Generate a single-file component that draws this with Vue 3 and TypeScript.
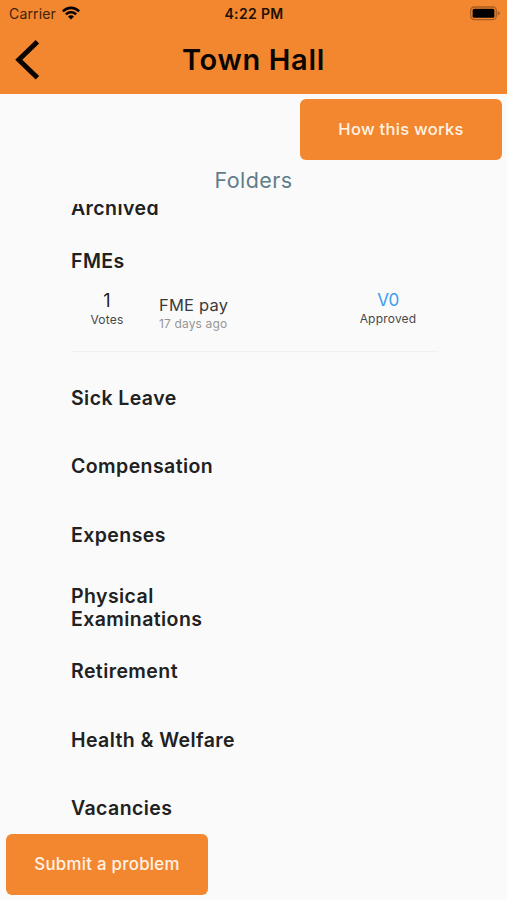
<script setup lang="ts">
interface Problem {
  votes: number
  title: string
  age: string
  version: string
  status: string
}

interface Folder {
  name: string
  modifier?: string
  problems: Problem[]
}

const folders: Folder[] = [
  { name: 'Archived', modifier: 'compact', problems: [] },
  {
    name: 'FMEs',
    modifier: 'open',
    problems: [
      { votes: 1, title: 'FME pay', age: '17 days ago', version: 'V0', status: 'Approved' },
    ],
  },
  { name: 'Sick Leave', problems: [] },
  { name: 'Compensation', problems: [] },
  { name: 'Expenses', modifier: 'before-tall', problems: [] },
  { name: 'Physical Examinations', modifier: 'tall', problems: [] },
  { name: 'Retirement', problems: [] },
  { name: 'Health & Welfare', problems: [] },
  { name: 'Vacancies', problems: [] },
]
</script>

<template>
  <div class="screen">
    <header class="header">
      <div class="status-bar">
        <div class="carrier">
          <span class="carrier-name">Carrier</span>
          <svg class="wifi" viewBox="0 0 18 14" width="18" height="14" aria-hidden="true">
            <path d="M0 4.4C5-.7 13-.7 18 4.4L16.2 6.2C12.2 2.3 5.8 2.3 1.8 6.2Z" />
            <path d="M3 7.4C6.4 4.1 11.6 4.1 15 7.4L13.2 9.2C10.7 6.9 7.3 6.9 4.8 9.2Z" />
            <path d="M6 10.4C7.7 8.8 10.3 8.8 12 10.4L9 13.4Z" />
          </svg>
        </div>
        <span class="clock">4:22 PM</span>
        <svg class="battery" viewBox="0 0 31 15" width="31" height="15" aria-hidden="true">
          <rect class="battery-shell" x="1.7" y="1" width="25.6" height="12.6" rx="3.6" />
          <rect x="3.6" y="2.8" width="21.8" height="9" rx="1.6" />
          <path class="battery-tip" d="M28.6 5Q30.8 5.8 30.8 7.3T28.6 9.6Z" />
        </svg>
      </div>
      <div class="title-bar">
        <button class="back" type="button" aria-label="Back">
          <svg viewBox="0 0 26 42" width="26" height="42" aria-hidden="true">
            <path d="M22.4 2.8L3.8 20.8L22.4 38.8" />
          </svg>
        </button>
        <h1 class="title">Town Hall</h1>
      </div>
    </header>

    <div class="top-action">
      <button class="action help" type="button">How this works</button>
    </div>

    <h2 class="heading">Folders</h2>

    <main class="folders">
      <section
        v-for="folder in folders"
        :key="folder.name"
        class="folder"
        :class="folder.modifier"
      >
        <h3 class="folder-name">{{ folder.name }}</h3>
        <article v-for="problem in folder.problems" :key="problem.title" class="problem">
          <div class="votes">
            <span class="vote-count">{{ problem.votes }}</span>
            <span class="caption">Votes</span>
          </div>
          <div class="summary">
            <span class="problem-title">{{ problem.title }}</span>
            <span class="age">{{ problem.age }}</span>
          </div>
          <div class="state">
            <span class="version">{{ problem.version }}</span>
            <span class="caption">{{ problem.status }}</span>
          </div>
        </article>
      </section>
    </main>

    <footer class="bottom-action">
      <button class="action submit" type="button">Submit a problem</button>
    </footer>
  </div>
</template>

<style>
body {
  margin: 0;
  background: #fafafa;
}
</style>

<style scoped>
.screen {
  display: flex;
  flex-direction: column;
  box-sizing: border-box;
  width: 100%;
  height: 900px;
  overflow: hidden;
  background: #fafafa;
  color: #212121;
  font-family: Inter, 'Liberation Sans', sans-serif;
}

h1,
h2,
h3 {
  margin: 0;
}

button {
  border: 0;
  font-family: inherit;
}

.header {
  flex: none;
  height: 94px;
  background: #f38730;
  color: #0b0502;
}

.status-bar {
  display: grid;
  grid-template-columns: 1fr auto 1fr;
  align-items: center;
  height: 27px;
  padding: 0 7px 0 9px;
}

.carrier {
  display: flex;
  align-items: center;
  gap: 6px;
}

.wifi {
  margin-top: -2px;
}

.carrier-name {
  color: #40220c;
  font-size: 14px;
  line-height: 27px;
  letter-spacing: 0.15px;
}

.clock {
  margin-right: 1px;
  color: #201006;
  font-size: 14px;
  font-weight: 600;
  letter-spacing: 0.35px;
}

.battery {
  justify-self: end;
  margin-top: -1px;
}

.battery-shell {
  fill: none;
  stroke: #a85d20;
  stroke-width: 1.3;
}

.battery-tip {
  fill: #a85d20;
}

.title-bar {
  display: grid;
  grid-template-columns: 60px 1fr 60px;
  align-items: center;
  height: 66px;
}

.back {
  display: flex;
  padding: 0 0 0 15px;
  background: none;
}

.back path {
  fill: none;
  stroke: #0b0502;
  stroke-width: 5;
}

.title {
  color: #0b0502;
  font-size: 29px;
  font-weight: 600;
  line-height: 36px;
  letter-spacing: 0.65px;
  text-align: center;
}

.top-action {
  display: flex;
  flex: none;
  justify-content: flex-end;
  padding: 5px 5px 0 0;
}

.action {
  width: 202px;
  height: 61px;
  padding: 0 0 2px;
  border-radius: 6px;
  background: #f38730;
  color: #fff3e6;
  font-size: 16.5px;
  font-weight: 500;
  letter-spacing: 0.3px;
}

.submit {
  padding: 0 0 1px;
  font-size: 16.8px;
}

.heading {
  flex: none;
  height: 44px;
  color: #607d8b;
  font-size: 21.5px;
  font-weight: 400;
  line-height: 41px;
  letter-spacing: 0.45px;
  text-align: center;
}

.folders {
  flex: none;
  height: 611px;
  padding: 0 69px 0 71px;
  overflow: hidden;
}

.folder {
  height: 68.4px;
}

.folder-name {
  width: 185px;
  font-size: 19.5px;
  font-weight: 600;
  line-height: 23.3px;
  letter-spacing: 0.42px;
}

.compact {
  height: 53px;
  margin-top: -7px;
}

.open {
  height: 136.8px;
}

.before-tall {
  height: 61.5px;
}

.tall {
  height: 75.3px;
}

.tall .folder-name {
  width: 150px;
}

.problem {
  display: flex;
  align-items: flex-start;
  height: 77.7px;
  border-bottom: 1px solid #f1f1f1;
}

.votes,
.summary,
.state {
  display: flex;
  flex-direction: column;
}

.votes {
  align-items: center;
  width: 72px;
  padding-top: 17px;
}

.summary {
  flex: 1;
  padding: 22px 0 0 16px;
}

.state {
  align-items: center;
  width: 100px;
  padding-top: 16px;
}

.vote-count {
  font-size: 18px;
  line-height: 22px;
}

.caption {
  color: #484848;
  font-size: 12px;
  line-height: 16px;
  letter-spacing: 0.2px;
}

.problem-title {
  color: #3a3a3a;
  font-size: 16.5px;
  line-height: 21px;
  letter-spacing: 0.2px;
}

.age {
  color: #969696;
  font-size: 12px;
  line-height: 16px;
  letter-spacing: 0.15px;
}

.version {
  color: #3b9df0;
  font-size: 17px;
  line-height: 22px;
  letter-spacing: -0.3px;
}

.bottom-action {
  display: flex;
  padding: 19px 0 0 6px;
}
</style>
